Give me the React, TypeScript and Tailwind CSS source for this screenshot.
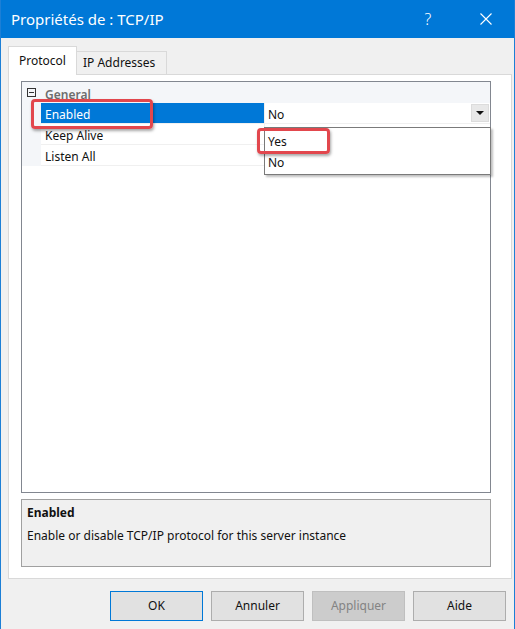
// App.tsx — "Propriétés de : TCP/IP" dialog

const font = { fontFamily: '"Noto Sans", "Open Sans", sans-serif' };

type Row = { label: string; selected?: boolean };

const rows: Row[] = [
  { label: "Enabled", selected: true },
  { label: "Keep Alive" },
  { label: "Listen All" },
];

function Button({ label, primary, disabled }: { label: string; primary?: boolean; disabled?: boolean }) {
  return (
    <div
      className={`w-[93px] h-[30px] flex items-center justify-center text-[12px] border ${
        primary
          ? "border-[#0078d7] bg-[#e1e1e1]"
          : disabled
          ? "border-[#bfbfbf] bg-[#cccccc] text-[#838383]"
          : "border-[#adadad] bg-[#e1e1e1]"
      }`}
    >
      {label}
    </div>
  );
}

export default function App() {
  return (
    <div
      className="relative w-[515px] h-[629px] bg-[#f0f0f0] border-x border-[#1c7fd6] text-[#111] overflow-hidden"
      style={font}
    >
      {/* title bar */}
      <div className="h-[38px] bg-[#0078d7] text-white flex items-center pl-[11px] -mx-px">
        <span className="text-[15px] flex-1">Propriétés de : TCP/IP</span>
        <span className="text-[16px] w-[46px] text-center font-light mr-[12px]">?</span>
        <span className="w-[46px] h-[38px] flex items-center justify-center mr-[6px]">
          <svg width="12" height="12" viewBox="0 0 12 12" stroke="white" strokeWidth="1.1">
            <path d="M0.5 0.5 L11.5 11.5 M11.5 0.5 L0.5 11.5" />
          </svg>
        </span>
      </div>

      <div className="pl-[7px] pr-[2px] pt-[7px]">
        {/* tabs */}
        <div className="flex items-end h-[29px]">
          <div className="h-[29px] w-[69px] bg-white border border-b-0 border-[#d9d9d9] flex items-center pl-[10px] text-[12px] relative z-10 -mb-px">
            Protocol
          </div>
          <div className="h-[23px] w-[90px] bg-[#f0f0f0] border border-l-0 border-b-0 border-[#d9d9d9] flex items-center pl-[6px] text-[12px]">
            IP Addresses
          </div>
        </div>

        {/* tab page */}
        <div className="h-[505px] bg-white border border-[#d9d9d9] pl-[12px] pr-[20px] pt-[6px]">
          {/* property grid */}
          <div className="h-[412px] border border-[#828790] bg-white">
            <div className="h-[21px] bg-[#f4f6f9] flex items-center">
              <div className="w-[19px] flex items-center justify-center">
                <div className="w-[9px] h-[9px] border border-[#333] flex items-center justify-center">
                  <div className="w-[5px] h-px bg-[#333]" />
                </div>
              </div>
              <span className="pl-[4px] pt-[5px] text-[12px] font-semibold text-[#6d6d6d]">General</span>
            </div>
            {rows.map((r) => (
              <div key={r.label} className="h-[21px] flex">
                <div className="w-[19px] bg-[#f4f6f9]" />
                <div
                  className={`w-[223px] flex items-center pl-[4px] pt-[3px] text-[12px] border-b border-[#f0f0f0] ${
                    r.selected ? "bg-[#0078d7] text-white" : ""
                  }`}
                >
                  {r.label}
                </div>
                <div className="flex-1 flex items-center border-l border-b border-[#f0f0f0] pl-[3px] text-[12px]">
                  {r.selected && (
                    <>
                      <span className="flex-1 pt-[3px]">No</span>
                      <div className="w-[18px] h-[18px] bg-[#e8e8e8] border border-[#dcdcdc] flex items-center justify-center mr-px">
                        <svg width="8" height="4" viewBox="0 0 8 4">
                          <path d="M0 0 H8 L4 4 Z" fill="#111" />
                        </svg>
                      </div>
                    </>
                  )}
                </div>
              </div>
            ))}
          </div>

          {/* description */}
          <div className="mt-[6px] h-[68px] bg-[#f0f0f0] border border-[#a0a0a0] px-[5px] pt-[3px] text-[12px]">
            <div className="font-bold h-[20px] flex items-center">Enabled</div>
            <div className="mt-[4px]">Enable or disable TCP/IP protocol for this server instance</div>
          </div>
        </div>

        {/* buttons */}
        <div className="flex justify-end gap-[8px] pr-[6px] mt-[12px]">
          <Button label="OK" primary />
          <Button label="Annuler" />
          <Button label="Appliquer" disabled />
          <Button label="Aide" />
        </div>
      </div>

      {/* open dropdown list */}
      <div className="absolute left-[263px] top-[127px] w-[227px] h-[48px] bg-white border border-[#7a7a7a] shadow-[2px_2px_2px_rgba(0,0,0,0.25)] text-[12px] pt-[3px]">
        <div className="h-[21px] flex items-center pl-[3px]">Yes</div>
        <div className="h-[21px] flex items-center pl-[3px]">No</div>
      </div>

      {/* red highlight boxes */}
      <div className="absolute left-[30px] top-[99px] w-[122px] h-[30px] border-[3px] border-[#e2474d] rounded-[4px] shadow-[1px_2px_3px_rgba(0,0,0,0.35)]" />
      <div className="absolute left-[256px] top-[128px] w-[73px] h-[26px] border-[3px] border-[#e2474d] rounded-[4px] shadow-[1px_2px_3px_rgba(0,0,0,0.35)]" />
    </div>
  );
}
